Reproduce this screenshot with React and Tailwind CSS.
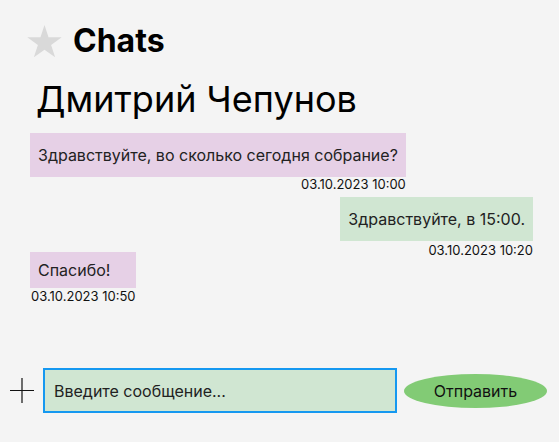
import React, { useState } from 'react';

const messages = [
  { id: 1, text: 'Здравствуйте, во сколько сегодня собрание?', time: '03.10.2023 10:00', mine: false },
  { id: 2, text: 'Здравствуйте, в 15:00.', time: '03.10.2023 10:20', mine: true },
  { id: 3, text: 'Спасибо!', time: '03.10.2023 10:50', mine: false },
];

const App = () => {
  const [draft, setDraft] = useState('');

  return (
    <div className="w-[559px] h-[442px] bg-[#f4f4f4] text-[#111] flex flex-col" style={{ fontFamily: 'Inter, "Noto Sans", sans-serif' }}>
      {/* header */}
      <div className="flex items-center gap-[11px] pl-[27px] pt-[24px]">
        <svg width="35" height="33" viewBox="0 0 24 23" className="fill-[#d9d9d9]">
          <path d="M12 0l2.8 8.5H24l-7.4 5.4 2.8 8.6L12 17.2l-7.4 5.3 2.8-8.6L0 8.5h9.2z" />
        </svg>
        <h1 className="text-[32px] font-bold leading-[34px] text-black">Chats</h1>
      </div>

      <h2 className="text-[36px] leading-[44px] text-black pl-[36px] mt-[19px]">Дмитрий Чепунов</h2>

      <div className="flex flex-col px-[30px] mt-[12px] pr-[26px]">
        {/* message 1 */}
        <div className="flex flex-col items-start">
          <div className="flex flex-col items-end">
            <div className="bg-[#e6d0e6] px-[8px] py-[10px] text-[16px] leading-[24px] text-[#222]">{messages[0].text}</div>
            <span className="text-[13px] leading-[12px] mt-[1px]">{messages[0].time}</span>
          </div>
        </div>
        {/* message 2 */}
        <div className="flex flex-col items-end mt-[7px]">
          <div className="bg-[#d0e6d2] px-[8px] py-[10px] text-[16px] leading-[24px] text-[#222]">{messages[1].text}</div>
          <span className="text-[13px] leading-[12px] mt-[3px]">{messages[1].time}</span>
        </div>
        {/* message 3 */}
        <div className="flex flex-col items-start mt-[-4px]">
          <div className="flex flex-col items-stretch">
            <div className="bg-[#e6d0e6] px-[8px] py-[6px] text-[16px] leading-[24px] text-[#222]">{messages[2].text}</div>
            <span className="text-[13px] leading-[12px] mt-[2px] ml-[1px]">{messages[2].time}</span>
          </div>
        </div>
      </div>

      {/* input row */}
      <div className="flex items-center mt-auto mb-[29px]">
        <button className="w-[43px] h-[45px] flex items-center justify-center">
          <svg width="24" height="25" viewBox="0 0 24 25" stroke="#111" strokeWidth="1.2">
            <path d="M12 0v25M0 12.5h24" />
          </svg>
        </button>
        <input
          value={draft}
          onChange={(e) => setDraft(e.target.value)}
          placeholder="Введите сообщение..."
          className="w-[354px] h-[45px] bg-[#d0e6d2] border-2 border-[#1598f0] px-[9px] text-[16px] text-[#222] placeholder:text-[#222] outline-none"
        />
        <button className="ml-[7px] w-[143px] h-[34px] rounded-[50%] bg-[#82cb75] text-[16px] text-[#111]">
          Отправить
        </button>
      </div>
    </div>
  );
};

export default App;
